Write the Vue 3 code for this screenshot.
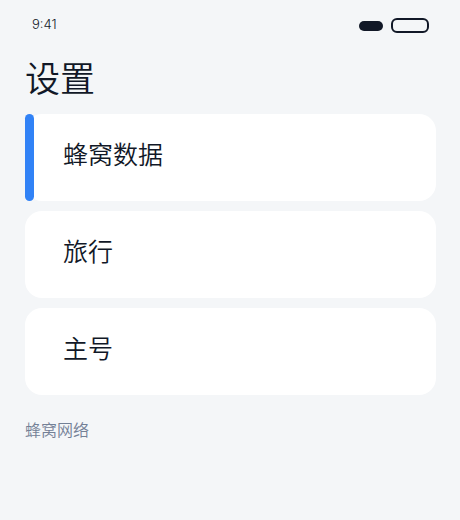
<script setup>
import { ref } from "vue";

const rows = [
  { id: "cellular", label: "蜂窝数据" },
  { id: "travel", label: "旅行" },
  { id: "primary", label: "主号" },
];

const active = ref("cellular");

const onSelect = (id) => {
  active.value = id;
};
</script>

<template>
  <div class="screen">
    <header class="status-bar">
      <span class="time">9:41</span>
      <div class="indicators">
        <span class="signal"></span>
        <span class="battery"></span>
      </div>
    </header>
    <main>
      <h1>设置</h1>
      <ul class="rows">
        <li v-for="row in rows" :key="row.id">
          <button
            type="button"
            class="row"
            :class="{ selected: row.id === active }"
            @click="onSelect(row.id)"
          >
            {{ row.label }}
          </button>
        </li>
      </ul>
      <p class="note">蜂窝网络</p>
    </main>
  </div>
</template>

<style>
body {
  margin: 0;
  background-color: #f4f6f8;
}
</style>

<style scoped>
.screen {
  box-sizing: border-box;
  min-height: 100vh;
  padding: 16px 24px 16px 25px;
  background-color: #f4f6f8;
  color: #111827;
  font-family: "Noto Sans CJK SC", sans-serif;
  font-weight: 350;
}

.status-bar {
  display: flex;
  align-items: flex-start;
  justify-content: space-between;
  padding: 0 7px;
}

.time {
  font-family: Inter, "Noto Sans CJK SC", sans-serif;
  font-size: 13px;
  font-weight: 300;
  line-height: 16px;
}

.indicators {
  display: flex;
  align-items: center;
  gap: 8px;
  height: 19px;
}

.signal {
  width: 24px;
  height: 10px;
  border-radius: 5px;
  background-color: #111827;
}

.battery {
  box-sizing: border-box;
  width: 38px;
  height: 15px;
  border: 2px solid #111827;
  border-radius: 6px;
}

h1 {
  margin: 17px 0 13px;
  font-size: 35px;
  font-weight: 350;
  line-height: 49px;
}

.rows {
  display: flex;
  flex-direction: column;
  gap: 10px;
  margin: 0;
  padding: 0;
  list-style: none;
}

.row {
  display: block;
  position: relative;
  width: 100%;
  padding: 21px 38px 30px;
  border: none;
  border-radius: 17px;
  background-color: #ffffff;
  color: inherit;
  font: inherit;
  font-size: 25px;
  line-height: 36px;
  text-align: left;
  cursor: pointer;
}

.row.selected::before {
  content: "";
  position: absolute;
  top: 0;
  bottom: 0;
  left: 0;
  width: 9px;
  border-radius: 5px;
  background-color: #3182f6;
}

.note {
  margin: 22px 0 0;
  color: #738096;
  font-size: 16px;
  line-height: 24px;
}
</style>
